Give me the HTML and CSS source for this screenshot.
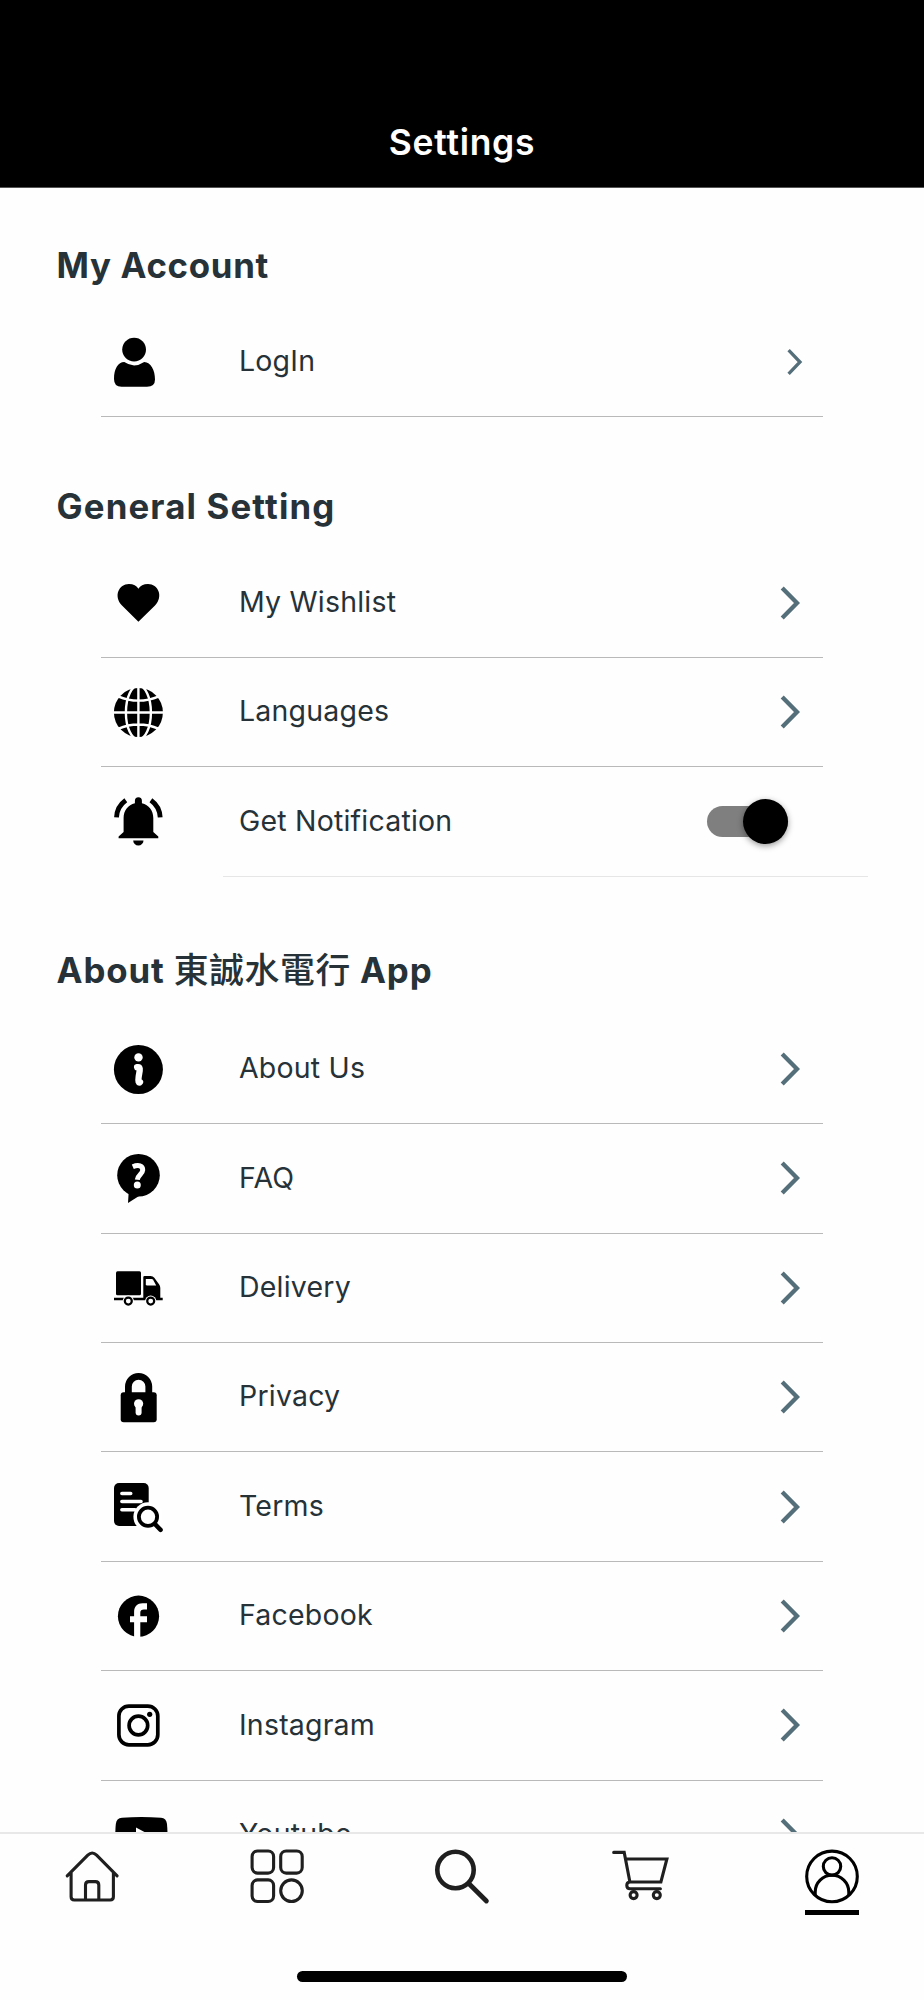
FILE: index.html
```html
<!DOCTYPE html>
<html lang="en">
<head>
<meta charset="utf-8">
<title>Settings</title>
<link rel="stylesheet" href="styles.css">
</head>
<body>
<div class="screen">
<header class="header"><h1 class="title">Settings</h1></header>
<main class="content">
  <section class="section account">
    <h2 class="heading">My Account</h2>
    <div class="row">
      <svg class="icon" viewBox="0 0 56 56"><circle cx="24.1" cy="15.6" r="11.9"/><path d="M14.3 28.1Q24 34.8 34.2 28C41 28.5 45 36 45 45.5Q45 52.8 37 52.8H11.5Q4 52.8 4 45C4 35 8 28.3 14.3 28.1Z"/></svg>
      <span class="label">LogIn</span>
      <svg class="chevron small" viewBox="0 0 24 36"><path d="M9.6 6.1L21 18L9.6 29.9"/></svg>
    </div>
  </section>
  <section class="section general">
    <h2 class="heading">General Setting</h2>
    <div class="row">
      <svg class="icon" viewBox="0 0 56 56"><path d="M28.4 46.7L12 30.6C3 21 9 9 18.9 9C23.5 9 26.7 11 28.4 13.8C30.2 11 33.5 9 38 9C48 9 53.8 21 45 30.6Z"/></svg>
      <span class="label">My Wishlist</span>
      <svg class="chevron" viewBox="0 0 24 36"><path d="M3.2 2.9L18 18L3.2 33.1"/></svg>
    </div>
    <div class="row">
      <svg class="icon" viewBox="0 0 56 56"><circle cx="28.4" cy="28.5" r="24.5"/><g class="cut"><path d="M28.4 3V54M3 28.5H54M8 12.3Q28.4 21 49 12.3M8 44.9Q28.4 36.2 49 44.9"/><ellipse cx="28.4" cy="28.5" rx="12.5" ry="27"/></g></svg>
      <span class="label">Languages</span>
      <svg class="chevron" viewBox="0 0 24 36"><path d="M3.2 2.9L18 18L3.2 33.1"/></svg>
    </div>
    <div class="row plain">
      <svg class="icon" viewBox="0 0 56 56"><path d="M24.9 10.3V7.8A3.5 3.5 0 0 1 31.9 7.8V10.3C39 12 43.3 17.5 43.3 25V39L48.3 43.5V45.2H8.6V43.5L13.6 39V25C13.6 17.5 18 12 24.9 10.3ZM23.2 47.4H33.5A5.1 5.1 0 0 1 23.2 47.4Z"/><path class="line" stroke-width="4.8" d="M6.5 24.4C6.8 17.5 9.8 11.5 15.8 7.2M50.2 24.4C49.9 17.5 46.9 11.5 40.9 7.2"/></svg>
      <span class="label">Get Notification</span>
      <span class="switch"><span class="thumb"></span></span>
    </div>
    <div class="divider"></div>
  </section>
  <section class="section about">
    <h2 class="heading">About <span class="cjk">東誠水電行</span> App</h2>
    <div class="row">
      <svg class="icon" viewBox="0 0 56 56"><circle cx="28.4" cy="28.5" r="24.5"/><circle class="white" cx="28.5" cy="16.4" r="4.2"/><path class="cut info-stem" d="M27.1 26.2C31.2 25.6 29.6 30 28.7 35.5C27.9 41 28.8 42.6 30 41"/></svg>
      <span class="label">About Us</span>
      <svg class="chevron" viewBox="0 0 24 36"><path d="M3.2 2.9L18 18L3.2 33.1"/></svg>
    </div>
    <div class="row">
      <svg class="icon" viewBox="0 0 56 56"><circle cx="28.5" cy="25.2" r="21.3"/><path d="M18.7 42L18 53L29 46Z"/><path class="cut question" d="M22.8 16.8C28.5 14.3 32.9 15.8 32.7 20.2C32.5 24.3 27.8 24.7 27.3 29.8"/><circle class="white" cx="27.3" cy="35.1" r="3.5"/></svg>
      <span class="label">FAQ</span>
      <svg class="chevron" viewBox="0 0 24 36"><path d="M3.2 2.9L18 18L3.2 33.1"/></svg>
    </div>
    <div class="row">
      <svg class="icon" viewBox="0 0 56 56"><rect x="6" y="11.2" width="25" height="24.1" rx="1.5"/><path d="M4 37.7H33.3V17.3Q33.3 16 34.6 16H40.5Q43 16 44.3 17.8L49 24.2Q50.3 26 50.3 28V37.7H52.7V40.3H4Z"/><path class="white" d="M35.8 19H41.6Q42.6 19 43.1 19.8L46.2 25.6H37.2Q35.8 25.6 35.8 24.2Z"/><circle class="white" cx="18.3" cy="41.1" r="5.6"/><circle class="white" cx="40.7" cy="41.1" r="5.6"/><g class="line" stroke-width="2.2"><circle cx="18.3" cy="41.1" r="3.5"/><circle cx="40.7" cy="41.1" r="3.5"/></g></svg>
      <span class="label">Delivery</span>
      <svg class="chevron" viewBox="0 0 24 36"><path d="M3.2 2.9L18 18L3.2 33.1"/></svg>
    </div>
    <div class="row">
      <svg class="icon" viewBox="0 0 56 56"><rect x="10.7" y="23.3" width="36" height="30" rx="3"/><path class="line" stroke-width="6.8" d="M18.4 25V17.6A10.2 10.2 0 0 1 38.8 17.6V25"/><circle class="white" cx="28.6" cy="34.8" r="4.6"/><path class="cut keyhole" d="M28.6 36V43.6"/></svg>
      <span class="label">Privacy</span>
      <svg class="chevron" viewBox="0 0 24 36"><path d="M3.2 2.9L18 18L3.2 33.1"/></svg>
    </div>
    <div class="row">
      <svg class="icon" viewBox="0 0 56 56"><rect x="4" y="4" width="34.7" height="43" rx="5"/><path class="cut text-lines" d="M11.9 14.5H20.7M11.9 22.5H31M11.9 30.7H25"/><circle class="white" cx="38" cy="37.8" r="14.6"/><circle class="line" stroke-width="3.8" cx="38" cy="37.8" r="9.1"/><path class="line" stroke-width="4.4" stroke-linecap="round" d="M44.8 44.9L50.6 50.9"/></svg>
      <span class="label">Terms</span>
      <svg class="chevron" viewBox="0 0 24 36"><path d="M3.2 2.9L18 18L3.2 33.1"/></svg>
    </div>
    <div class="row">
      <svg class="icon" viewBox="0 0 56 56"><circle cx="28.5" cy="28.2" r="20.6"/><path class="white" d="M24.1 50V34.3H20V28.3H24.1V24C24.1 18.5 27.5 15.3 32.5 15.3H37V21.4H34C31.5 21.4 30.3 22.5 30.3 24.5V28.3H37V34.3H30.3V50Z"/></svg>
      <span class="label">Facebook</span>
      <svg class="chevron" viewBox="0 0 24 36"><path d="M3.2 2.9L18 18L3.2 33.1"/></svg>
    </div>
    <div class="row">
      <svg class="icon" viewBox="0 0 56 56"><g class="line" stroke-width="3.7"><rect x="8.9" y="9.1" width="38.9" height="38.7" rx="10"/><circle cx="28.4" cy="28.5" r="9.3"/></g><circle cx="39.7" cy="17.3" r="2.6"/></svg>
      <span class="label">Instagram</span>
      <svg class="chevron" viewBox="0 0 24 36"><path d="M3.2 2.9L18 18L3.2 33.1"/></svg>
    </div>
    <div class="row">
      <svg class="icon" viewBox="0 0 56 56"><path d="M12 10.7Q31.4 9.5 51 10.7Q56.4 11.2 57 17Q58 28 57 39.5Q56.4 45 51 45.4Q31.4 46.6 12 45.4Q6.4 45 5.8 39.5Q4.8 28 5.8 17Q6.4 11.2 12 10.7Z"/><path class="white" d="M26 20.4L40 28L26 35.7Z"/></svg>
      <span class="label">Youtube</span>
      <svg class="chevron" viewBox="0 0 24 36"><path d="M3.2 2.9L18 18L3.2 33.1"/></svg>
    </div>
  </section>
</main>
<footer class="footer">
  <nav class="tabs">
    <a class="tab"><svg viewBox="0 0 80 70"><path d="M15.2 35.8L35.8 15.2Q40.2 10.8 44.6 15.2L65.1 35.8M19.1 33V56.8Q19.1 60 22.3 60H58.2Q61.4 60 61.4 56.8V33M33.5 60V45Q33.5 41.6 36.9 41.6H43.4Q46.8 41.6 46.8 45V60"/></svg></a>
    <a class="tab"><svg viewBox="0 0 80 70"><rect x="15.1" y="11" width="21.5" height="22.1" rx="5.5"/><rect x="43.7" y="11" width="21.5" height="22.1" rx="5.5"/><rect x="15.1" y="39.9" width="21.5" height="21.6" rx="5.5"/><circle cx="54.5" cy="50.7" r="10.8"/></svg></a>
    <a class="tab"><svg viewBox="0 0 80 70"><circle cx="33.5" cy="30" r="18.2" stroke-width="4.6"/><path stroke-width="4.8" d="M47 43.8L64.4 61"/></svg></a>
    <a class="tab"><svg viewBox="0 0 80 70"><path d="M6.7 12.4H17.2L22.9 42H53.9L59.9 19H18.9M22.9 42Q19.6 42.4 19.8 45.6Q20 48.7 23 48.7H53.4"/><circle cx="26.6" cy="55.1" r="3.5"/><circle cx="49.8" cy="55.1" r="3.5"/></svg></a>
    <a class="tab active"><svg viewBox="0 0 80 70"><circle cx="40" cy="36.4" r="25.3"/><circle cx="40" cy="26.4" r="8.7"/><path d="M23.2 54.5V52A16.8 16.8 0 0 1 56.8 52V54.5"/></svg></a>
  </nav>
  <div class="home-indicator"></div>
</footer>
</div>
</body>
</html>
```
FILE: styles.css
```css
* { box-sizing: border-box; }
body { margin: 0; background: #fff; font-family: Inter, "Noto Sans CJK TC", sans-serif; color: #263238; }
.screen { display: flex; flex-direction: column; width: 924px; height: 2000px; overflow: hidden; }
.header { flex: none; display: flex; justify-content: center; align-items: flex-end; height: 188px; padding-bottom: 24px; background: #000; border-bottom: 1px solid #555; }
.title { margin: 0; font-size: 35.5px; line-height: 40px; font-weight: 600; letter-spacing: 0.7px; color: #fff; }
.content { flex: none; height: 1644px; overflow: hidden; background: #fefefe; }
.heading { margin: 0 0 22.8px; padding-left: 56.5px; height: 40px; line-height: 40px; font-size: 34.8px; font-weight: 700; letter-spacing: 0.7px; white-space: nowrap; }
.account { padding-top: 56.8px; }
.general { padding-top: 68.6px; }
.general .heading { letter-spacing: 1.15px; }
.about { padding-top: 73.5px; }
.about .heading { margin-bottom: 24.6px; letter-spacing: 0.9px; }
.cjk { font-family: "Noto Sans CJK TC", sans-serif; font-weight: 500; line-height: 1; letter-spacing: 0.6px; }
.row { display: flex; align-items: center; height: 109.4px; margin: 0 101px; padding: 0 20px 0 9px; border-bottom: 1px solid #b9b9b9; }
.row.plain { border-bottom-color: transparent; }
.icon { flex: none; width: 56px; height: 56px; overflow: visible; fill: #000; }
.line { fill: none; stroke: #000; }
.cut { fill: none; stroke: #fff; stroke-width: 2.4px; }
.info-stem { stroke-width: 6.3px; stroke-linecap: round; }
.question { stroke-width: 5px; }
.keyhole { stroke-width: 6px; stroke-linecap: round; }
.text-lines { stroke-width: 3.6px; stroke-linecap: round; }
.white { fill: #fff; }
.label { flex: 1; padding: 0 0 1.6px 73px; font-size: 28.5px; line-height: 36px; letter-spacing: 0.2px; white-space: nowrap; }
.chevron { flex: none; width: 24px; height: 36px; fill: none; stroke: #546e7a; stroke-width: 4.3px; }
.chevron.small { stroke-width: 3.3px; }
.switch { flex: none; display: flex; align-items: center; justify-content: flex-end; width: 81px; height: 31px; margin-right: 15.5px; border-radius: 16px; background: #7f7f7f; }
.thumb { flex: none; width: 45px; height: 45px; border-radius: 50%; background: #000; box-shadow: 0 2px 6px rgba(0, 0, 0, 0.4); }
.divider { height: 1px; margin: -0.8px 56px 0 223px; background: #e6e6e6; }
.footer { flex: none; display: flex; flex-direction: column; align-items: center; justify-content: space-between; height: 168px; padding: 6px 0 18px; border-top: 2px solid #e8e8e8; background: #fefefe; }
.tabs { display: flex; width: 100%; }
.tab { flex: 1; display: flex; flex-direction: column; align-items: center; }
.tab svg { width: 80px; height: 70px; fill: none; stroke: #1f1f1f; stroke-width: 3.1px; stroke-linecap: round; }
.tab.active svg { stroke: #000; }
.tab.active::after { content: ""; width: 54px; height: 5px; background: #000; }
.home-indicator { width: 330px; height: 11px; border-radius: 6px; background: #000; }
```
